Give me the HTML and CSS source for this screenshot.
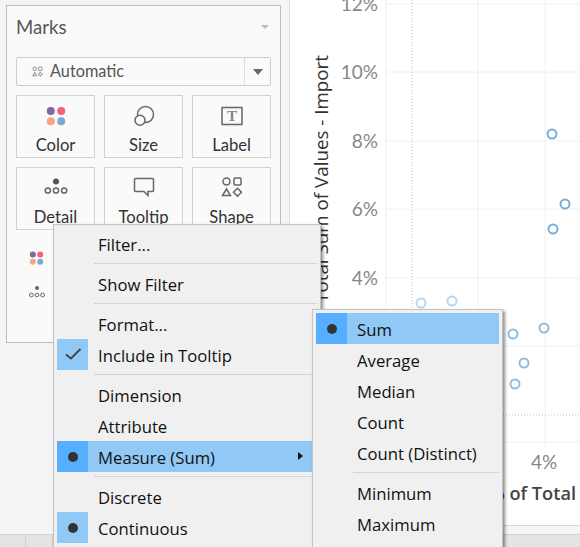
FILE: index.html
```html
<!DOCTYPE html>
<html lang="en">

<head>
    <meta charset="UTF-8">
    <title>Marks</title>
    <link rel="stylesheet" href="styles.css">
</head>

<body>
    <div class="app">
        <aside class="sidebar">
            <section class="marks">
                <header class="marks-head">
                    <h2>Marks</h2>
                    <span class="caret caret-light"></span>
                </header>
                <div class="select">
                    <svg class="select-icon" viewBox="0 0 12 12" width="11" height="11">
                        <circle cx="3" cy="3" r="1.9" />
                        <rect x="7.2" y="1.2" width="3.6" height="3.6" rx=".6" />
                        <path d="M3 7l2 3.6H1z" />
                        <path d="M9 6.8l2.1 2.1L9 11 6.9 8.9z" />
                    </svg>
                    <span class="select-value">Automatic</span>
                    <span class="select-btn"><span class="caret"></span></span>
                </div>
                <div class="tiles">
                    <div class="tile">
                        <svg class="tile-icon" viewBox="0 0 24 24" width="24" height="24">
                            <circle cx="6.8" cy="7" r="4" fill="#7e6a9c" />
                            <circle cx="17.2" cy="7" r="4" fill="#f0627d" />
                            <circle cx="6.8" cy="17.3" r="4" fill="#f5a67d" />
                            <circle cx="17.2" cy="17.3" r="4" fill="#7da7d4" />
                        </svg>
                        <span>Color</span>
                    </div>
                    <div class="tile">
                        <svg class="tile-icon line" viewBox="0 0 24 24" width="24" height="24">
                            <circle cx="13.5" cy="10.5" r="8" />
                            <circle cx="8" cy="16.2" r="5" fill="#fafafa" />
                        </svg>
                        <span>Size</span>
                    </div>
                    <div class="tile">
                        <svg class="tile-icon line" viewBox="0 0 24 24" width="24" height="24">
                            <rect x="2" y="3.5" width="20" height="17" />
                            <text class="glyph-t" x="12" y="17" text-anchor="middle">T</text>
                        </svg>
                        <span>Label</span>
                    </div>
                    <div class="tile">
                        <svg class="tile-icon line" viewBox="0 0 24 24" width="24" height="24">
                            <circle cx="12" cy="5.5" r="3" fill="#555" stroke="none" />
                            <circle cx="3.8" cy="14.5" r="2.6" />
                            <circle cx="12" cy="14.5" r="2.6" />
                            <circle cx="20.2" cy="14.5" r="2.6" />
                        </svg>
                        <span>Detail</span>
                    </div>
                    <div class="tile">
                        <svg class="tile-icon line" viewBox="0 0 24 24" width="24" height="24">
                            <path d="M3.5 2.5h17a1 1 0 0 1 1 1v11a1 1 0 0 1-1 1h-4.5v4l-4-4H3.5a1 1 0 0 1-1-1v-11a1 1 0 0 1 1-1z" />
                        </svg>
                        <span>Tooltip</span>
                    </div>
                    <div class="tile">
                        <svg class="tile-icon line" viewBox="0 0 24 24" width="24" height="24">
                            <circle cx="6.5" cy="5.5" r="3.5" />
                            <rect x="14" y="2" width="7" height="7" rx="1" />
                            <path d="M6.5 13l4 6.5h-8z" />
                            <path d="M17.5 12.3l4 4-4 4-4-4z" />
                        </svg>
                        <span>Shape</span>
                    </div>
                </div>
                <div class="legend">
                    <svg viewBox="0 0 16 14" width="16" height="14">
                        <circle cx="3.8" cy="3.4" r="3" fill="#7e6a9c" />
                        <circle cx="11.2" cy="3.4" r="3" fill="#f0627d" />
                        <circle cx="3.8" cy="10.8" r="3" fill="#f5a67d" />
                        <circle cx="11.2" cy="10.8" r="3" fill="#7da7d4" />
                    </svg>
                    <svg class="line thin" viewBox="0 0 16 14" width="16" height="14">
                        <circle cx="8" cy="3" r="2" fill="#666" stroke="none" />
                        <circle cx="2.4" cy="10" r="1.9" />
                        <circle cx="8" cy="10" r="1.9" />
                        <circle cx="13.6" cy="10" r="1.9" />
                    </svg>
                </div>
            </section>
        </aside>

        <main class="chart">
            <svg class="plot" viewBox="290 0 290 525" width="290" height="525">
                <g class="grid">
                    <path d="M386 4H580M386 72H580M386 141H580M386 209H580M386 278H580M386 346H580M386 442H580" />
                    <path d="M386 0V446M478 0V446M545 0V446" />
                </g>
                <path class="zero" d="M412 0V442M386 415H580" />
                <g class="ticks">
                    <text x="378" y="11">12%</text>
                    <text x="378" y="79">10%</text>
                    <text x="378" y="148">8%</text>
                    <text x="378" y="216">6%</text>
                    <text x="378" y="285">4%</text>
                </g>
                <text class="tick-x" x="544" y="469">4%</text>
                <text class="axis-title axis-y" transform="translate(328 55) rotate(-90)">% of Total Sum of Values - Import</text>
                <text class="axis-title axis-x" x="576" y="500">% of Total</text>
                <g class="points pale">
                    <circle cx="421" cy="303" r="4.5" />
                    <circle cx="452" cy="301" r="4.5" />
                </g>
                <g class="points">
                    <circle cx="513" cy="334" r="4.5" />
                    <circle cx="544" cy="328" r="4.5" />
                    <circle cx="524" cy="363" r="4.5" />
                    <circle cx="515" cy="384" r="4.5" />
                </g>
                <g class="points deep">
                    <circle cx="552" cy="134" r="4.5" />
                    <circle cx="565" cy="204" r="4.5" />
                    <circle cx="553" cy="229" r="4.5" />
                </g>
            </svg>
            <div class="chart-foot"></div>
        </main>

        <footer class="tabs">
            <span class="tab"></span>
            <span class="tab"></span>
        </footer>

        <div class="menu menu-main">
            <div class="item"><span class="mark"></span><span class="label">Filter...</span></div>
            <div class="sep"></div>
            <div class="item"><span class="mark"></span><span class="label">Show Filter</span></div>
            <div class="sep"></div>
            <div class="item"><span class="mark"></span><span class="label">Format...</span></div>
            <div class="item">
                <span class="mark on">
                    <svg viewBox="0 0 31 31" width="31" height="31"><path class="check" d="M9 15.5l5 4 9.5-9.5" /></svg>
                </span><span class="label">Include in Tooltip</span>
            </div>
            <div class="sep"></div>
            <div class="item"><span class="mark"></span><span class="label">Dimension</span></div>
            <div class="item"><span class="mark"></span><span class="label">Attribute</span></div>
            <div class="item active"><span class="mark"><i class="dot"></i></span><span class="label">Measure (Sum)</span><span class="arrow"></span></div>
            <div class="sep"></div>
            <div class="item"><span class="mark"></span><span class="label">Discrete</span></div>
            <div class="item"><span class="mark on"><i class="dot"></i></span><span class="label">Continuous</span></div>
        </div>

        <div class="menu menu-sub">
            <div class="item active"><span class="mark"><i class="dot"></i></span><span class="label">Sum</span></div>
            <div class="item"><span class="mark"></span><span class="label">Average</span></div>
            <div class="item"><span class="mark"></span><span class="label">Median</span></div>
            <div class="item"><span class="mark"></span><span class="label">Count</span></div>
            <div class="item"><span class="mark"></span><span class="label">Count (Distinct)</span></div>
            <div class="sep"></div>
            <div class="item"><span class="mark"></span><span class="label">Minimum</span></div>
            <div class="item"><span class="mark"></span><span class="label">Maximum</span></div>
        </div>
    </div>
</body>

</html>
```

FILE: styles.css
```css
html,
body {
    margin: 0;
    height: 100%;
    overflow: hidden;
}

body {
    background: #fff;
    font-family: 'Lato', Arial, sans-serif;
}

.app {
    position: relative;
    display: grid;
    grid-template-columns: 290px 290px;
    grid-template-rows: 534px 13px;
    width: 580px;
    height: 547px;
    overflow: hidden;
}

/* sidebar */
.sidebar {
    box-sizing: border-box;
    padding: 5px 0 0 6px;
    background: #f5f5f5;
    border-right: 1px solid #ddd;
}

.marks {
    box-sizing: border-box;
    width: 275px;
    height: 338px;
    padding: 0 9px;
    background: #fafafa;
    border: 1px solid #bdbdbd;
}

.marks-head {
    display: flex;
    align-items: center;
    justify-content: space-between;
    height: 42px;
    padding-right: 2px;
}

.marks-head h2 {
    margin: 0;
    font-size: 18.6px;
    font-weight: 400;
    color: #555;
}

.caret {
    display: block;
    width: 0;
    height: 0;
    border-left: 5px solid transparent;
    border-right: 5px solid transparent;
    border-top: 6px solid #666;
}

.caret-light {
    border-left-width: 4px;
    border-right-width: 4px;
    border-top: 4px solid #bbb;
}

.select {
    box-sizing: border-box;
    display: flex;
    align-items: center;
    height: 29px;
    margin-top: 9px;
    width: 255px;
    border: 1px solid #ccc;
    border-radius: 2px;
}

.select-icon {
    margin-left: 15px;
    fill: none;
    stroke: #999;
    stroke-width: 1.1;
}

.select-value {
    flex: 1;
    margin: -2px 0 0 7px;
    font-size: 16.3px;
    color: #555;
}

.select-btn {
    box-sizing: border-box;
    display: flex;
    align-items: center;
    justify-content: center;
    width: 26px;
    height: 27px;
    border-left: 1px solid #ddd;
}

.tiles {
    display: grid;
    grid-template-columns: repeat(3, 79px);
    grid-auto-rows: 63px;
    gap: 9px;
    margin-top: 9px;
}

.tile {
    box-sizing: border-box;
    display: flex;
    flex-direction: column;
    align-items: center;
    padding-top: 8px;
    border: 1px solid #d2d2d2;
    font-size: 16.6px;
    color: #333;
}

.tile-icon {
    margin-bottom: 7px;
}

.line {
    fill: none;
    stroke: #666;
    stroke-width: 1.5;
}

.thin {
    stroke-width: 1;
}

.glyph-t {
    font-family: 'Liberation Serif', serif;
    font-size: 15px;
    font-weight: 700;
    fill: #888;
    stroke: none;
}

.legend {
    display: flex;
    flex-direction: column;
    align-items: flex-start;
    gap: 20px;
    margin: 21px 0 0 13px;
}

/* chart */
.chart {
    display: flex;
    flex-direction: column;
}

.plot {
    display: block;
    flex: none;
}

.grid path {
    fill: none;
    stroke: #f0f0f0;
    stroke-width: 1;
}

.zero {
    fill: none;
    stroke: #c4c4c4;
    stroke-width: 1;
    stroke-dasharray: 1 2;
}

.ticks text {
    text-anchor: end;
}

.ticks text,
.tick-x {
    font-size: 19px;
    fill: #888;
}

.tick-x {
    text-anchor: middle;
}

.axis-title {
    font-family: 'Open Sans', Arial, sans-serif;
    font-size: 18.2px;
    font-weight: 500;
    fill: #333;
    text-anchor: end;
}

.axis-y {
    font-size: 18.8px;
}

.axis-x {
    font-weight: 600;
    fill: #444;
}

.points circle {
    fill: none;
    stroke: #8fbde0;
    stroke-width: 2;
}

.pale circle {
    stroke: #b6d7f0;
}

.deep circle {
    stroke: #7aaed8;
}

.chart-foot {
    flex: 1;
    background: #f5f5f5;
    border-top: 1px solid #d8d8d8;
}

.tabs {
    grid-column: 1 / 3;
    display: flex;
    background: #e4e4e4;
    border-top: 1px solid #d0d0d0;
}

.tab {
    width: 25px;
    margin-right: 1px;
    border-right: 1px solid #d0d0d0;
}

/* context menus */
.menu {
    position: absolute;
    box-sizing: border-box;
    padding: 3px;
    background: #f0f0f0;
    border: 1px solid #c4c4c4;
    box-shadow: 2px 2px 3px rgba(0, 0, 0, .45);
    font-family: 'Open Sans', Arial, sans-serif;
    font-size: 16.7px;
    color: #111;
}

.menu-main {
    left: 53px;
    top: 224px;
    width: 268px;
    height: 340px;
}

.menu-sub {
    left: 312px;
    top: 309px;
    width: 191px;
    height: 260px;
}

.item {
    position: relative;
    display: flex;
    align-items: center;
    height: 31px;
    white-space: nowrap;
}

.item.active {
    background: #90c8f6;
}

.label {
    padding-top: 2px;
}

.mark {
    flex: none;
    display: flex;
    align-items: center;
    justify-content: center;
    width: 31px;
    height: 31px;
    margin-right: 10px;
}

.mark.on {
    background: #90c8f6;
}

.active .mark {
    background: #56aeff;
}

.dot {
    display: block;
    width: 10px;
    height: 10px;
    border-radius: 50%;
    background: #333;
}

.check {
    fill: none;
    stroke: #444;
    stroke-width: 2;
}

.arrow {
    position: absolute;
    left: 241px;
    top: 11px;
    width: 0;
    height: 0;
    border-top: 4px solid transparent;
    border-bottom: 4px solid transparent;
    border-left: 5px solid #111;
}

.sep {
    height: 1px;
    margin: 4px 0 4px 37px;
    background: #d4d4d4;
}
```
